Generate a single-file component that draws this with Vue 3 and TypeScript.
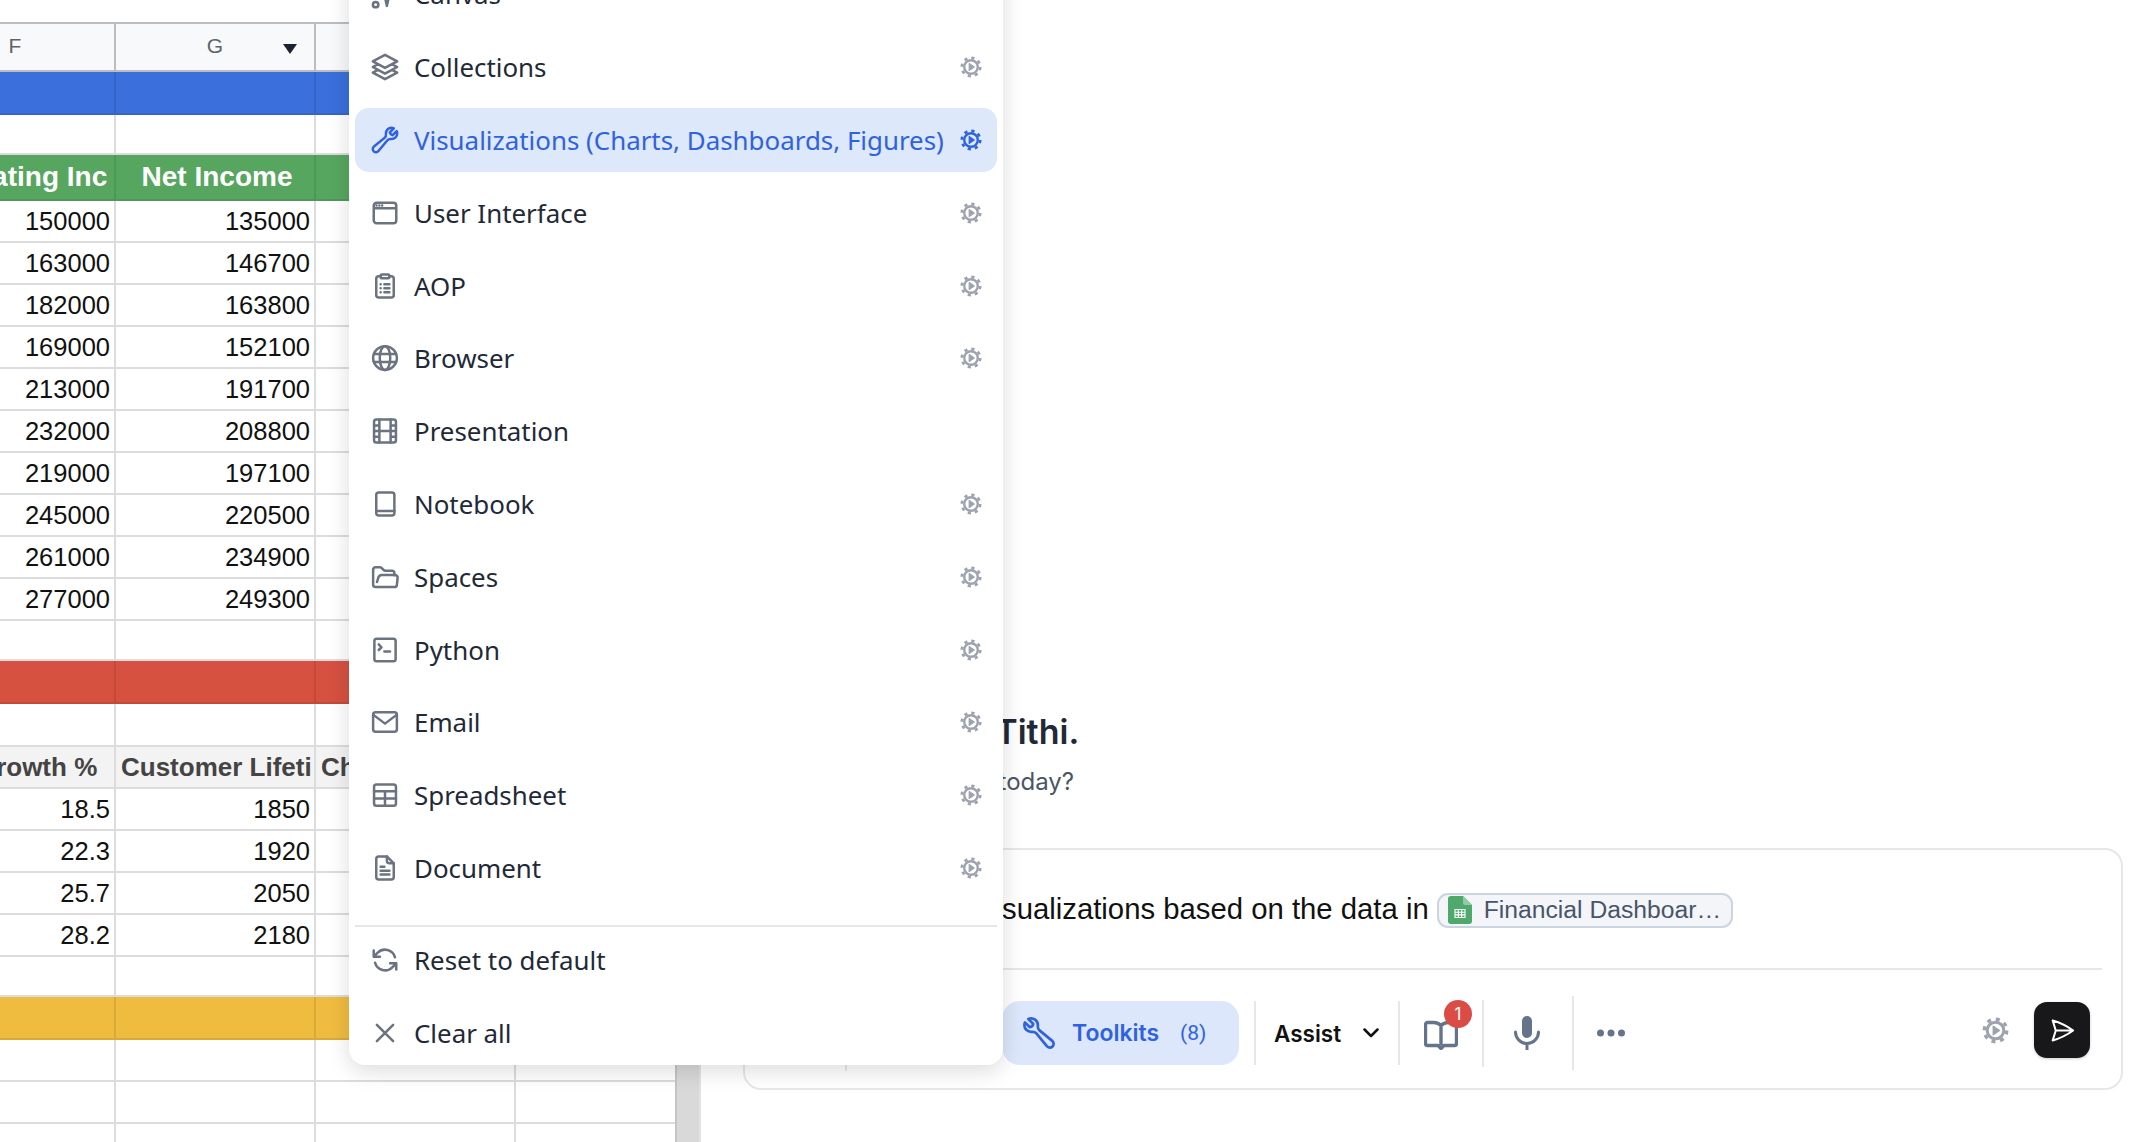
<template>
  <div class="page">
    <svg class="sprite" aria-hidden="true">
      <symbol id="i-canvas" viewBox="0 0 24 24">
        <circle cx="4.5" cy="20.5" r="2.2" />
        <path d="M11 10l2.500 11.500L16 10" />
      </symbol>
      <symbol id="i-layers" viewBox="0 0 24 24">
        <path d="M6.429 9.750 2.250 12l4.179 2.250m0-4.500 5.571 3 5.571-3m-11.142 0L2.250 7.500 12 2.250l9.750 5.250-4.179 2.250m0 0L21.750 12l-4.179 2.250m0 0 4.179 2.250L12 21.750 2.250 16.500l4.179-2.250m11.142 0-5.571 3-5.571-3" />
      </symbol>
      <symbol id="i-wrench" viewBox="0 0 24 24">
        <path d="M21.750 6.750a4.500 4.500 0 0 1-4.884 4.484c-1.076-.091-2.264.071-2.950.904l-7.152 8.684a2.548 2.548 0 1 1-3.586-3.586l8.684-7.152c.833-.686.995-1.874.904-2.950a4.500 4.500 0 0 1 6.336-4.486l-3.276 3.276a3.004 3.004 0 0 0 2.250 2.250l3.276-3.276c.256.565.398 1.192.398 1.852Z" />
      </symbol>
      <symbol id="i-window" viewBox="0 0 24 24">
        <path d="M3 8.250V18a2.250 2.250 0 0 0 2.250 2.250h13.500A2.250 2.250 0 0 0 21 18V8.250m-18 0V6a2.250 2.250 0 0 1 2.250-2.250h13.500A2.250 2.250 0 0 1 21 6v2.250m-18 0h18M5.250 6h.008v.008H5.250V6ZM7.500 6h.008v.008H7.500V6Zm2.250 0h.008v.008H9.750V6Z" />
      </symbol>
      <symbol id="i-clipboard" viewBox="0 0 24 24">
        <path d="M9.500 2.750h5a1 1 0 0 1 1 1v1a1 1 0 0 1-1 1h-5a1 1 0 0 1-1-1v-1a1 1 0 0 1 1-1Z" />
        <path d="M8.500 4.250H7a2 2 0 0 0-2 2v13a2 2 0 0 0 2 2h10a2 2 0 0 0 2-2v-13a2 2 0 0 0-2-2h-1.500" />
        <path d="M8.500 10.500h.01M11.500 10.500h4M8.500 13.750h.01M11.500 13.750h4M8.500 17h.01M11.500 17h4" />
      </symbol>
      <symbol id="i-globe" viewBox="0 0 24 24">
        <circle cx="12" cy="12" r="9.500" />
        <ellipse cx="12" cy="12" rx="4.200" ry="9.500" />
        <path d="M3.200 8.800h17.600M3.200 15.200h17.600" />
      </symbol>
      <symbol id="i-film" viewBox="0 0 24 24">
        <rect x="3.250" y="2.750" width="17.500" height="18.500" rx="1.800" />
        <path d="M7.500 2.750v18.500M16.500 2.750v18.500M7.500 12h9M3.250 7.500h4.250M3.250 12h4.250M3.250 16.500h4.250M16.500 7.500h4.250M16.500 12h4.250M16.500 16.500h4.250" />
      </symbol>
      <symbol id="i-book" viewBox="0 0 24 24">
        <rect x="5" y="2.750" width="14.500" height="18.500" rx="2" />
        <path d="M5 17.500h14.500" />
      </symbol>
      <symbol id="i-folder" viewBox="0 0 24 24">
        <path d="M2.500 6a1.900 1.900 0 0 1 1.900-1.900h3.400a2 2 0 0 1 1.400.6l1.700 1.700a2 2 0 0 0 1.400.6h5.200a2 2 0 0 1 2 2v1.600" />
        <path d="M2.500 6v12a2 2 0 0 0 2 2h15.200a1.800 1.800 0 0 0 1.800-1.600l.6-5.800a2 2 0 0 0-2-2.200H9.500a3 3 0 0 0-2.800 2L5.600 16" />
      </symbol>
      <symbol id="i-terminal" viewBox="0 0 24 24">
        <rect x="3.500" y="3" width="17" height="18" rx="1.800" />
        <path d="M7 7.500l2.200 2.300L7 12M11.500 13.200h4.500" />
      </symbol>
      <symbol id="i-mail" viewBox="0 0 24 24">
        <rect x="2.500" y="4.250" width="19" height="15.500" rx="2" />
        <path d="M3 6.500l9 6.800 9-6.800" />
      </symbol>
      <symbol id="i-table" viewBox="0 0 24 24">
        <rect x="3.250" y="3.500" width="17.500" height="17" rx="1.800" />
        <path d="M3.250 9h17.500M3.250 14.750h17.500M12 9v11.500" />
      </symbol>
      <symbol id="i-doc" viewBox="0 0 24 24">
        <path d="M7 2.750h6.500l5.500 5.500V19.200a2 2 0 0 1-2 2H7a2 2 0 0 1-2-2V4.750a2 2 0 0 1 2-2Z" />
        <path d="M13.500 2.750v3.500a2 2 0 0 0 2 2H19M8.500 11h3M8.500 14.250h7M8.500 17.250h7" />
      </symbol>
      <symbol id="i-reset" viewBox="0 0 24 24">
        <path transform="matrix(-1 0 0 1 24 0)" d="M16.023 9.348h4.992v-.001M2.985 19.644v-4.992m0 0h4.992m-4.993 0 3.181 3.183a8.250 8.250 0 0 0 13.803-3.700M4.031 9.865a8.250 8.250 0 0 1 13.803-3.700l3.181 3.182m0-4.991v4.990" />
      </symbol>
      <symbol id="i-close" viewBox="0 0 24 24">
        <path d="M5.500 5.500l13 13M18.500 5.500l-13 13" />
      </symbol>
      <symbol id="i-gear" viewBox="0 0 24 24">
        <circle class="gear-teeth" cx="12" cy="12" r="10" />
        <circle class="gear-ring" cx="12" cy="12" r="7.400" />
        <path class="gear-play" d="M10 8.200v7.600l5.500-3.800z" />
      </symbol>
    </svg>

    <section class="sheet-panel">
      <div class="sheet">
        <div class="sheet-top">
          <div v-for="col in ['F', 'G', 'H', 'I']" :key="col" class="top-cell">
            <template v-if="col === 'F' || col === 'G'">{{ col }}</template>
            <span v-if="col === 'G'" class="filter-caret" />
          </div>
        </div>
        <div
          v-for="(row, i) in rows"
          :key="i"
          class="sheet-row"
          :class="row.kind"
          :style="{ height: row.h + 'px' }"
        >
          <div v-for="(cell, j) in row.cells" :key="j" class="cell">
            <span>{{ cell }}</span>
          </div>
        </div>
      </div>
      <div class="scrollbar" />
    </section>

    <section class="chat-panel">
      <div class="greeting">
        <h1>Good morning, Tithi.</h1>
        <p>How can I help you today?</p>
      </div>

      <div class="composer">
        <div class="prompt">
          <span>Create some visualizations based on the data in</span>
          <span class="chip">
            <svg class="chip-icon" viewBox="0 0 24 28">
              <path fill="#4fa86c" d="M3 0h12l9 9v16a3 3 0 0 1-3 3H3a3 3 0 0 1-3-3V3a3 3 0 0 1 3-3Z" />
              <path fill="#8fcda5" d="M15 0l9 9h-7a2 2 0 0 1-2-2Z" />
              <path fill="none" stroke="#fff" stroke-width="1.100" d="M7 13.500h10v8H7ZM7 16.200h10M7 18.900h10M10.300 13.500v8M13.700 13.500v8" />
            </svg>
            <span class="chip-label">Financial Dashboar…</span>
          </span>
        </div>

        <div class="toolbar">
          <span class="tb-div hidden-div" />
          <button class="toolkits">
            <svg class="toolkits-icon" viewBox="0 0 24 24">
              <path transform="matrix(-1 0 0 1 24 0)" d="M21.750 6.750a4.500 4.500 0 0 1-4.884 4.484c-1.076-.091-2.264.071-2.950.904l-7.152 8.684a2.548 2.548 0 1 1-3.586-3.586l8.684-7.152c.833-.686.995-1.874.904-2.950a4.500 4.500 0 0 1 6.336-4.486l-3.276 3.276a3.004 3.004 0 0 0 2.250 2.250l3.276-3.276c.256.565.398 1.192.398 1.852Z" />
            </svg>
            <span class="toolkits-label">Toolkits</span>
            <span class="toolkits-count">(8)</span>
          </button>
          <span class="tb-div div-a" />
          <button class="assist">
            <span>Assist</span>
            <svg class="chevron" viewBox="0 0 16 10"><path d="M1.500 1.500L8 8l6.500-6.500" /></svg>
          </button>
          <span class="tb-div div-b" />
          <div class="book">
            <svg viewBox="0 0 34 32">
              <path d="M17 7.500C15 5.500 13 4.500 10 4.500H3.500a2 2 0 0 0-2 2v19a2 2 0 0 0 2 2H14l3 3 3-3h10.500a2 2 0 0 0 2-2v-19a2 2 0 0 0-2-2H24c-3 0-5 1-7 3Zm0 0v20" />
            </svg>
            <span class="badge">1</span>
          </div>
          <span class="tb-div div-c" />
          <svg class="mic" viewBox="0 0 26 34">
            <rect class="mic-body" x="8" y="0" width="10" height="22" rx="5" />
            <path d="M1.500 16a11.500 11.500 0 0 0 23 0M13 27.500V34" />
          </svg>
          <span class="tb-div div-d" />
          <svg class="dots" viewBox="0 0 28 8">
            <circle cx="3.500" cy="4" r="3.500" />
            <circle cx="14" cy="4" r="3.500" />
            <circle cx="24.500" cy="4" r="3.500" />
          </svg>
          <span class="tb-fill" />
          <svg class="tb-gear icon gear"><use href="#i-gear" /></svg>
          <button class="send">
            <svg viewBox="0 0 24 24">
              <path d="M6 12 3.269 3.125A59.769 59.769 0 0 1 21.485 12 59.768 59.768 0 0 1 3.270 20.875L5.999 12Zm0 0h15.400" />
            </svg>
          </button>
        </div>
      </div>
    </section>

    <div class="toolkit-menu">
      <div
        v-for="item in items"
        :key="item.label"
        class="menu-row"
        :class="{ active: item.active }"
      >
        <svg class="icon"><use :href="'#i-' + item.icon" /></svg>
        <span class="menu-label">{{ item.label }}</span>
        <svg v-if="item.gear" class="icon gear"><use href="#i-gear" /></svg>
      </div>
      <div class="menu-sep" />
      <div class="menu-row">
        <svg class="icon"><use href="#i-reset" /></svg>
        <span class="menu-label">Reset to default</span>
      </div>
      <div class="menu-row">
        <svg class="icon"><use href="#i-close" /></svg>
        <span class="menu-label">Clear all</span>
      </div>
    </div>
  </div>
</template>

<script setup lang="ts">
interface Row {
  kind: string
  h: number
  cells: string[]
}

interface MenuItem {
  label: string
  icon: string
  gear: boolean
  active?: boolean
}

const blank = ['', '', '', '']
const band = (kind: string, h: number): Row => ({ kind, h, cells: blank })
const nums = (a: number, b: number): Row => ({
  kind: 'data',
  h: 42,
  cells: [String(a), String(b), '', ''],
})

const rows: Row[] = [
  band('blue', 43),
  band('plain', 40),
  { kind: 'green', h: 46, cells: ['Operating Inc', 'Net Income', '', ''] },
  nums(150000, 135000),
  nums(163000, 146700),
  nums(182000, 163800),
  nums(169000, 152100),
  nums(213000, 191700),
  nums(232000, 208800),
  nums(219000, 197100),
  nums(245000, 220500),
  nums(261000, 234900),
  nums(277000, 249300),
  band('plain', 40),
  band('red', 43),
  band('plain', 43),
  { kind: 'grey', h: 42, cells: ['Rev Growth %', 'Customer Lifeti', 'Churn', ''] },
  nums(18.5, 1850),
  nums(22.3, 1920),
  nums(25.7, 2050),
  nums(28.2, 2180),
  band('plain', 40),
  band('yellow', 43),
  band('plain', 42),
  band('plain', 42),
  band('plain', 42),
]

const items: MenuItem[] = [
  { label: 'Canvas', icon: 'canvas', gear: false },
  { label: 'Collections', icon: 'layers', gear: true },
  { label: 'Visualizations (Charts, Dashboards, Figures)', icon: 'wrench', gear: true, active: true },
  { label: 'User Interface', icon: 'window', gear: true },
  { label: 'AOP', icon: 'clipboard', gear: true },
  { label: 'Browser', icon: 'globe', gear: true },
  { label: 'Presentation', icon: 'film', gear: false },
  { label: 'Notebook', icon: 'book', gear: true },
  { label: 'Spaces', icon: 'folder', gear: true },
  { label: 'Python', icon: 'terminal', gear: true },
  { label: 'Email', icon: 'mail', gear: true },
  { label: 'Spreadsheet', icon: 'table', gear: true },
  { label: 'Document', icon: 'doc', gear: true },
]
</script>

<style>
html,
body {
  margin: 0;
  background: #fff;
}

.gear-teeth {
  stroke-width: 3;
  stroke-linecap: butt;
  stroke-dasharray: 3.5 4.354;
}

.gear-ring {
  stroke-width: 2.6;
}

.gear-play {
  fill: currentColor;
  stroke-width: 1.2;
}
</style>

<style scoped>
.page {
  position: relative;
  display: flex;
  width: 2154px;
  height: 1142px;
  overflow: hidden;
  background: #fff;
  font-family: "Liberation Sans", Arial, sans-serif;
}

.sprite {
  position: absolute;
  width: 0;
  height: 0;
}

/* sheet */
.sheet-panel {
  display: flex;
  flex: none;
  width: 701px;
  height: 100%;
  border-right: 2px solid #e2e2e2;
  box-sizing: border-box;
}

.sheet {
  flex: none;
  width: 675px;
  padding-top: 22px;
  overflow: hidden;
}

.sheet-top {
  display: flex;
  height: 46px;
  margin-left: -84px;
  background: #f8f9fa;
  border-top: 2px solid #bdbdbd;
  border-bottom: 2px solid #bdbdbd;
  color: #5f6368;
  font-size: 21px;
}

.top-cell {
  position: relative;
  flex: none;
  display: flex;
  align-items: center;
  justify-content: center;
  width: 200px;
  padding-bottom: 2px;
  box-sizing: border-box;
  border-right: 2px solid #bdbdbd;
}

.filter-caret {
  position: absolute;
  right: 17px;
  top: 20px;
  width: 0;
  height: 0;
  border-left: 7px solid transparent;
  border-right: 7px solid transparent;
  border-top: 10px solid #1a2233;
}

.sheet-row {
  display: flex;
  margin-left: -84px;
  box-sizing: border-box;
  border-bottom: 2px solid #dcdcdc;
}

.cell {
  flex: none;
  display: flex;
  align-items: center;
  width: 200px;
  padding: 0 4px 0 5px;
  box-sizing: border-box;
  overflow: hidden;
  white-space: nowrap;
  border-right: 2px solid #dcdcdc;
  font-size: 25.5px;
  color: #111;
}

.data .cell {
  justify-content: flex-end;
}

.blue {
  background: #3a6fdc;
  border-bottom-color: #3565c9;
}

.blue .cell {
  border-right-color: #3565c9;
}

.green {
  background: #57a65f;
  border-bottom-color: #4f9757;
}

.green .cell {
  justify-content: center;
  padding: 0 1px 0 5px;
  border-right-color: #4f9757;
  font-size: 28px;
  font-weight: 700;
  color: #fff;
}

.red {
  background: #d65140;
  border-bottom-color: #c24a3b;
}

.red .cell {
  border-right-color: #c24a3b;
}

.yellow {
  background: #f0bc40;
  border-bottom-color: #d9aa3a;
}

.yellow .cell {
  border-right-color: #d9aa3a;
}

.grey {
  background: #f3f3f3;
}

.grey .cell {
  font-size: 26px;
  font-weight: 700;
  color: #444;
}

.scrollbar {
  flex: none;
  width: 24px;
  background: #d9d9d9;
  border-left: 2px solid #c4c4c4;
  box-sizing: border-box;
}

/* chat */
.chat-panel {
  display: flex;
  flex: 1;
  flex-direction: column;
  justify-content: flex-end;
  padding: 0 31px 52px 42px;
  min-width: 0;
}

.greeting {
  margin-bottom: 51px;
}

.greeting h1 {
  margin: 0 0 14px;
  font-family: Inter, sans-serif;
  font-size: 34px;
  font-weight: 600;
  line-height: 42px;
  color: #1f2937;
}

.greeting p {
  margin: 0;
  padding-left: 32px;
  font-family: Inter, sans-serif;
  font-size: 24px;
  line-height: 30px;
  color: #4b5563;
}

.composer {
  height: 242px;
  box-sizing: border-box;
  border: 2px solid #e5e7eb;
  border-radius: 18px;
}

.prompt {
  display: flex;
  align-items: center;
  gap: 8px;
  height: 120px;
  margin: 0 19px;
  padding-left: 41px;
  box-sizing: border-box;
  border-bottom: 2px solid #e5e7eb;
  font-size: 29.3px;
  color: #111;
  white-space: nowrap;
}

.chip {
  display: flex;
  align-items: center;
  flex: none;
  width: 296px;
  height: 35px;
  margin-top: 2px;
  padding: 0 0 0 9px;
  box-sizing: border-box;
  background: #f3f5f9;
  border: 2px solid #cbd5e1;
  border-radius: 11px;
  font-size: 24.7px;
  color: #475569;
}

.chip-icon {
  flex: none;
  width: 24px;
  height: 28px;
  margin-right: 12px;
}

.toolbar {
  display: flex;
  align-items: center;
  height: 118px;
  padding-top: 8px;
  padding-right: 31px;
  box-sizing: border-box;
}

.tb-div {
  flex: none;
  width: 2px;
  height: 64px;
  background: #e5e7eb;
}

.hidden-div {
  height: 76px;
  margin-left: 100px;
  margin-right: 155px;
}

.toolkits {
  display: flex;
  align-items: center;
  flex: none;
  width: 237px;
  height: 64px;
  padding: 0 0 0 19px;
  border: none;
  border-radius: 18px;
  background: #dce7fb;
  color: #2f62e0;
  font-family: Inter, sans-serif;
}

.toolkits-icon {
  width: 36px;
  height: 36px;
  fill: none;
  stroke: #2f62e0;
  stroke-width: 1.8;
  stroke-linecap: round;
  stroke-linejoin: round;
}

.toolkits-label {
  margin-left: 15px;
  font-size: 23px;
  font-weight: 600;
}

.toolkits-count {
  margin-left: 21px;
  font-family: Roboto, sans-serif;
  font-size: 21px;
}

.div-a {
  margin-left: 15px;
}

.assist {
  display: flex;
  align-items: center;
  flex: none;
  width: 105px;
  margin-left: 18px;
  padding: 0;
  border: none;
  background: none;
  font-family: Inter, sans-serif;
  font-size: 22.5px;
  font-weight: 600;
  color: #111;
}

.chevron {
  width: 16px;
  height: 10px;
  margin-left: auto;
  fill: none;
  stroke: #111;
  stroke-width: 2.5;
  stroke-linecap: round;
  stroke-linejoin: round;
}

.div-b {
  margin-left: 19px;
}

.book {
  position: relative;
  flex: none;
  width: 34px;
  height: 32px;
  margin-left: 24px;
  margin-top: 2px;
}

.book svg {
  display: block;
  width: 34px;
  height: 32px;
  fill: none;
  stroke: #64748b;
  stroke-width: 3.4;
  stroke-linejoin: round;
}

.badge {
  position: absolute;
  top: -18px;
  right: -14px;
  width: 28px;
  height: 28px;
  border-radius: 50%;
  background: #dc4c46;
  color: #fff;
  font-family: Inter, sans-serif;
  font-size: 17px;
  line-height: 28px;
  text-align: center;
}

.div-c {
  height: 67px;
  margin-left: 24px;
}

.mic {
  flex: none;
  width: 26px;
  height: 34px;
  margin-left: 30px;
  fill: none;
  stroke: #64748b;
  stroke-width: 3;
  stroke-linecap: round;
}

.mic-body {
  fill: #64748b;
  stroke: none;
}

.div-d {
  height: 74px;
  margin-left: 32px;
}

.dots {
  flex: none;
  width: 28px;
  height: 8px;
  margin-left: 23px;
  fill: #64748b;
}

.tb-fill {
  flex: 1;
}

.tb-gear {
  margin-top: -6px;
}

.send {
  display: flex;
  align-items: center;
  justify-content: center;
  flex: none;
  width: 56px;
  height: 56px;
  margin-left: 25px;
  margin-top: -6px;
  padding: 0;
  border: none;
  border-radius: 13px;
  background: #18181a;
  box-shadow: 0 1px 3px rgba(0, 0, 0, 0.2);
}

.send svg {
  width: 27px;
  height: 27px;
  fill: none;
  stroke: #fff;
  stroke-width: 1.8;
  stroke-linecap: round;
  stroke-linejoin: round;
}

/* toolkit popover, sits over the sheet and the composer */
.toolkit-menu {
  position: absolute;
  left: 349px;
  bottom: 77px;
  display: flex;
  flex-direction: column;
  gap: 8px;
  width: 654px;
  padding: 16px 6px 0;
  box-sizing: border-box;
  background: #fff;
  border-radius: 16px;
  box-shadow: 0 6px 22px rgba(0, 0, 0, 0.14);
  font-family: "Noto Sans", sans-serif;
  font-size: 25.9px;
  color: #1f2937;
}

.menu-row {
  display: flex;
  align-items: center;
  flex: none;
  height: 64.8px;
  padding: 0 15px;
  box-sizing: border-box;
  border-radius: 14px;
}

.menu-row.active {
  background: #dde8fb;
  color: #2f62e0;
}

.menu-label {
  flex: 1;
  margin-left: 14px;
  white-space: nowrap;
}

.icon {
  flex: none;
  width: 30px;
  height: 30px;
  fill: none;
  stroke: #6b7280;
  stroke-width: 2;
  stroke-linecap: round;
  stroke-linejoin: round;
}

.menu-row.active .icon {
  stroke: #2f62e0;
}

.icon.gear {
  width: 22px;
  height: 22px;
  stroke: #9ca3af;
  color: #9ca3af;
}

.tb-gear.icon.gear {
  width: 27px;
  height: 27px;
}

.menu-row.active .icon.gear {
  stroke: #2f62e0;
  color: #2f62e0;
}

.menu-sep {
  flex: none;
  height: 2px;
  margin: 17px 0 -8px;
  background: #e5e7eb;
}
</style>
